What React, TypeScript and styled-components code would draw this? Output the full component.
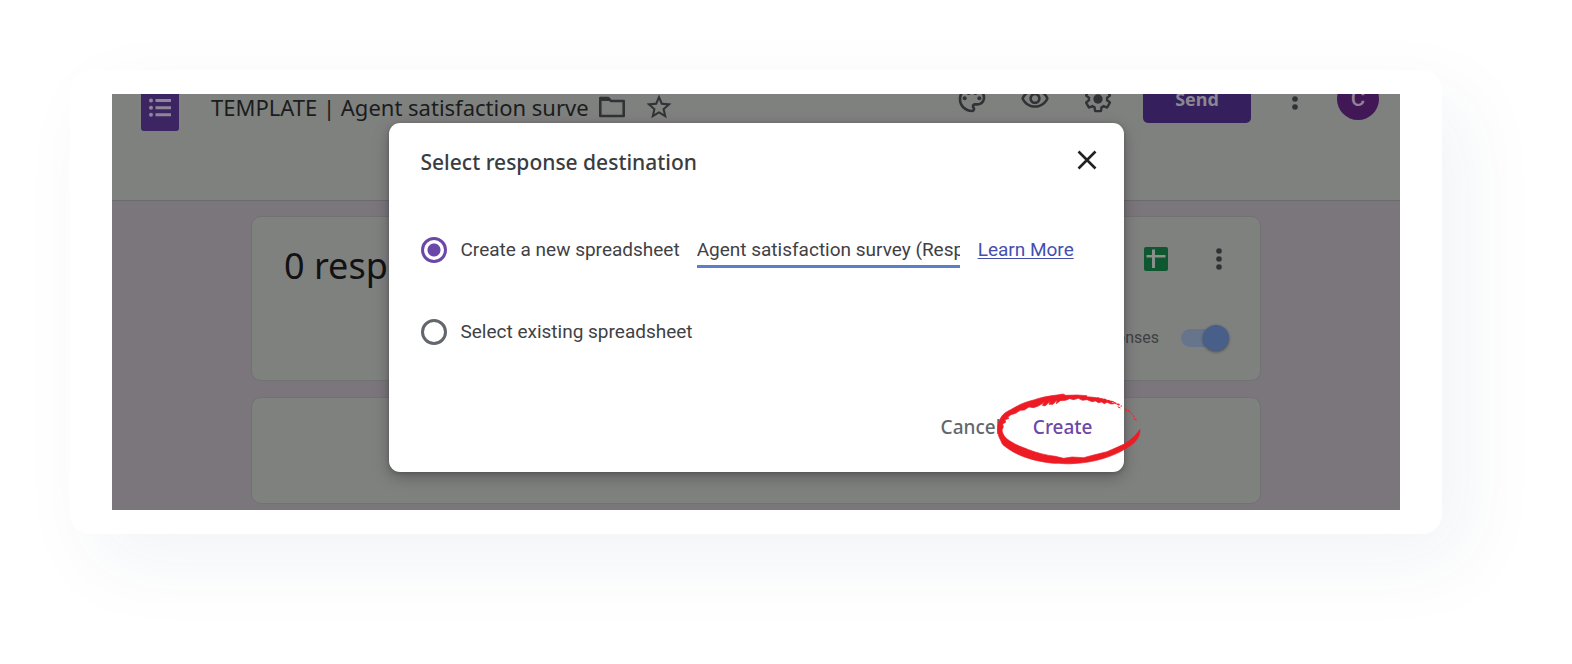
import React from "react";
import styled, { createGlobalStyle } from "styled-components";

const GlobalStyle = createGlobalStyle`
  *, *::before, *::after { box-sizing: border-box; }
  body { margin: 0; background: #ffffff; }
`;

const display = `"Noto Sans", "Open Sans", sans-serif`;
const body = `"Roboto", "Liberation Sans", sans-serif`;

const Page = styled.main`
  padding: 70px 130px 130px 70px;
  font-family: ${body};
`;

const Frame = styled.div`
  padding: 24px 42px;
  border-radius: 20px;
  background: #ffffff;
  box-shadow: 24px 28px 80px rgba(28, 62, 100, 0.06);
`;

const Stage = styled.div`
  position: relative;
  overflow: hidden;
  background: #7a767c;
  padding-bottom: 6px;
`;

const Header = styled.header`
  display: flow-root;
  height: 107px;
  background: #7f817f;
  border-bottom: 1px solid #6b6a6d;
`;

const Toolbar = styled.div`
  display: flex;
  align-items: flex-start;
  justify-content: space-between;
  margin-top: -19px;
  padding: 0 21px 0 29px;
`;

const TitleGroup = styled.div`
  display: flex;
  align-items: center;
  height: 64px;
`;

const Logo = styled.svg`
  margin: 0 32px 4px 0;
`;

const DocTitle = styled.h1`
  width: 377px;
  margin: 0 8px 0 0;
  overflow: hidden;
  white-space: nowrap;
  font: 400 22px/32px ${display};
  color: #1b1c1d;
`;

const IconButton = styled.button<{ $size?: number }>`
  display: flex;
  align-items: center;
  justify-content: center;
  width: ${(p) => p.$size ?? 32}px;
  height: ${(p) => p.$size ?? 32}px;
  padding: 0;
  border: 0;
  background: none;
  color: #303236;
`;

const TitleActions = styled.div`
  display: flex;
  gap: 15px;
`;

const Actions = styled.div`
  display: flex;
  align-items: center;
  height: 48px;
`;

const ActionIcons = styled.div`
  display: flex;
  gap: 31px;
  margin-right: 29px;
`;

const SendButton = styled.button`
  width: 108px;
  height: 48px;
  padding: 0;
  border: 0;
  border-radius: 5px;
  background: #35205d;
  color: #8b8792;
  font: 700 18px/24px ${display};
`;

const MoreSlot = styled.div`
  margin: 0 26px 0 28px;
`;

const Avatar = styled.div`
  width: 42px;
  height: 42px;
  border-radius: 50%;
  background: #411755;
  color: #918396;
  font: 500 22px/42px ${body};
  text-align: center;
`;

const Content = styled.div`
  display: flex;
  flex-direction: column;
  gap: 16px;
  max-width: 1010px;
  margin: 0 auto;
  padding-top: 15px;
`;

const Card = styled.section<{ $height: number }>`
  min-height: ${(p) => p.$height}px;
  padding: 25px 27px 0 32px;
  border: 1px solid #727274;
  border-radius: 10px;
  background: #7f817f;
`;

const CardRow = styled.div`
  display: flex;
  align-items: center;
  justify-content: space-between;
  height: 34px;
`;

const Count = styled.h2`
  margin: 14px 0 0;
  font: 400 36px/44px ${display};
  color: #121214;
`;

const CardTools = styled.div`
  display: flex;
  align-items: center;
  gap: 33px;
`;

const SwitchRow = styled.label`
  display: flex;
  align-items: center;
  justify-content: flex-end;
  gap: 22px;
  margin-top: 49px;
  padding-right: 4px;
  font: 400 16px/26px ${body};
  color: #3e4043;
`;

const Switch = styled.input`
  appearance: none;
  position: relative;
  width: 48px;
  height: 26px;
  margin: 0;
  &::before {
    content: "";
    position: absolute;
    inset: 4px 6px 4px 0;
    border-radius: 9px;
    background: #66758c;
  }
  &::after {
    content: "";
    position: absolute;
    top: 0;
    right: 0;
    width: 26px;
    height: 26px;
    border-radius: 50%;
    background: #485f8a;
    box-shadow: 0 1px 3px rgba(0, 0, 0, 0.4);
  }
`;

const Overlay = styled.div`
  position: absolute;
  inset: 0;
  display: flex;
  justify-content: center;
  align-items: flex-start;
  padding-top: 29px;
`;

const Dialog = styled.div`
  position: relative;
  width: 735px;
  padding: 21px 21px 22px 32px;
  border-radius: 11px;
  background: #ffffff;
  box-shadow: 0 5px 16px rgba(0, 0, 0, 0.28), 0 1px 4px rgba(0, 0, 0, 0.2);
  color: #3f4145;
`;

const DialogHead = styled.div`
  display: flex;
  align-items: center;
  justify-content: space-between;
`;

const DialogTitle = styled.h2`
  margin: 4px 0 0;
  font: 500 21px/28px ${display};
  color: #3a3c40;
`;

const Option = styled.div<{ $top: number }>`
  display: flex;
  align-items: center;
  height: 36px;
  margin-top: ${(p) => p.$top}px;
  font: 400 19px/26px ${body};
`;

const Radio = styled.input`
  appearance: none;
  width: 26px;
  height: 26px;
  margin: 0 14px 0 0;
  border: 3px solid #63676c;
  border-radius: 50%;
  background: #ffffff;
  &:checked {
    border-color: #6b48a8;
    background: radial-gradient(circle, #6b48a8 6px, #ffffff 7px);
  }
`;

const SheetName = styled.input`
  width: 263px;
  height: 36px;
  margin: 0 18px 0 17px;
  padding: 1px 0 0;
  border: 0;
  border-bottom: 3px solid #5b80c8;
  outline: 0;
  background: none;
  color: #3f4145;
  font: 400 19px/26px ${body};
`;

const LearnMore = styled.a`
  color: #4350b0;
  text-decoration: underline;
  text-underline-offset: 2px;
`;

const DialogFoot = styled.div`
  display: flex;
  justify-content: flex-end;
  gap: 32px;
  margin-top: 54px;
  padding-right: 10px;
`;

const TextButton = styled.button<{ $accent?: boolean }>`
  padding: 0;
  border: 0;
  background: none;
  font: 500 19px/46px ${display};
  color: ${(p) => (p.$accent ? "#6b48a8" : "#63676c")};
`;

const Highlight = styled.svg`
  position: absolute;
  right: -18px;
  bottom: 7px;
  pointer-events: none;
`;

const Dots = () => (
  <svg width="8" height="24" viewBox="0 0 8 24" fill="currentColor" aria-hidden="true">
    <circle cx="4" cy="4" r="2.8" />
    <circle cx="4" cy="12" r="2.8" />
    <circle cx="4" cy="20" r="2.8" />
  </svg>
);

export default function App() {
  return (
    <>
      <GlobalStyle />
      <Page>
        <Frame>
          <Stage>
            <Header>
              <Toolbar>
                <TitleGroup>
                  <Logo width="38" height="52" viewBox="0 0 38 52" aria-hidden="true">
                    <path d="M3 0h23l12 12v37a3 3 0 0 1-3 3H3a3 3 0 0 1-3-3V3a3 3 0 0 1 3-3z" fill="#3c2562" />
                    <g fill="#8d8797">
                      <circle cx="10" cy="21.500" r="2" />
                      <circle cx="10" cy="28.700" r="2" />
                      <circle cx="10" cy="35.700" r="2" />
                      <path d="M14.500 20H30v3H14.500zM14.500 27.200H30v3H14.500zM14.500 34.200H30v3H14.500z" />
                    </g>
                  </Logo>
                  <DocTitle>TEMPLATE | Agent satisfaction survey</DocTitle>
                  <TitleActions>
                    <IconButton aria-label="Move to folder">
                      <svg width="28" height="24" viewBox="0 0 28 24" fill="none" stroke="currentColor" strokeWidth="2.600" strokeLinejoin="round">
                        <path d="M2.300 3h8l2.700 3h12.700v15H2.300z" />
                        <path d="M2.300 3h8l2.700 3H2.300z" fill="currentColor" stroke="none" />
                      </svg>
                    </IconButton>
                    <IconButton aria-label="Star">
                      <svg width="30" height="30" viewBox="0 0 24 24" fill="currentColor">
                        <path d="M22 9.240l-7.190-.62L12 2 9.190 8.630 2 9.240l5.460 4.730L5.820 21 12 17.270 18.180 21l-1.630-7.030L22 9.240zM12 15.400l-3.760 2.270 1-4.280-3.320-2.880 4.380-.38L12 6.100l1.710 4.040 4.380.38-3.320 2.880 1 4.280L12 15.400z" />
                      </svg>
                    </IconButton>
                  </TitleActions>
                </TitleGroup>
                <Actions>
                  <ActionIcons>
                    <IconButton aria-label="Customize theme">
                      <svg width="32" height="32" viewBox="0 0 24 24" fill="currentColor">
                        <path d="M12 22C6.490 22 2 17.510 2 12S6.490 2 12 2s10 4.040 10 9c0 3.310-2.690 6-6 6h-1.770c-.28 0-.5.22-.5.5 0 .12.05.23.13.33.41.47.64 1.060.64 1.670 0 1.380-1.120 2.500-2.500 2.500zm0-18c-4.410 0-8 3.590-8 8s3.590 8 8 8c.28 0 .5-.22.5-.5 0-.16-.08-.28-.14-.35-.41-.46-.63-1.050-.63-1.650 0-1.380 1.120-2.500 2.500-2.500H16c2.210 0 4-1.790 4-4 0-3.860-3.590-7-8-7z" />
                        <circle cx="6.500" cy="11.500" r="1.500" />
                        <circle cx="9.500" cy="7.500" r="1.500" />
                        <circle cx="14.500" cy="7.500" r="1.500" />
                        <circle cx="17.500" cy="11.500" r="1.500" />
                      </svg>
                    </IconButton>
                    <IconButton aria-label="Preview">
                      <svg width="30" height="30" viewBox="0 0 24 24" fill="currentColor">
                        <path d="M12 6c3.790 0 7.170 2.130 8.820 5.500C19.170 14.870 15.790 17 12 17s-7.170-2.130-8.820-5.500C4.830 8.130 8.210 6 12 6m0-2C7 4 2.730 7.110 1 11.500 2.730 15.890 7 19 12 19s9.270-3.110 11-7.500C21.270 7.110 17 4 12 4zm0 5c1.380 0 2.500 1.120 2.500 2.500S13.380 14 12 14s-2.500-1.120-2.500-2.500S10.620 9 12 9m0-2c-2.480 0-4.500 2.020-4.500 4.500S9.520 16 12 16s4.500-2.020 4.500-4.500S14.480 7 12 7z" />
                      </svg>
                    </IconButton>
                    <IconButton aria-label="Settings">
                      <svg width="32" height="32" viewBox="0 0 24 24">
                        <path
                          d="M19.430 12.980c.04-.32.07-.64.07-.98s-.03-.66-.07-.98l2.110-1.650c.19-.15.24-.42.12-.64l-2-3.460c-.12-.22-.39-.3-.61-.22l-2.490 1c-.52-.4-1.080-.73-1.690-.98l-.38-2.650C14.460 2.180 14.250 2 14 2h-4c-.25 0-.46.18-.49.42l-.38 2.650c-.61.25-1.170.59-1.690.98l-2.490-1c-.23-.09-.49 0-.61.22l-2 3.460c-.13.22-.07.49.12.64l2.110 1.650c-.04.32-.07.65-.07.98s.03.66.07.98l-2.110 1.650c-.19.15-.24.42-.12.64l2 3.460c.12.22.39.3.61.22l2.490-1c.52.4 1.080.73 1.690.98l.38 2.650c.03.24.24.42.49.42h4c.25 0 .46-.18.49-.42l.38-2.650c.61-.25 1.170-.59 1.690-.98l2.490 1c.23.09.49 0 .61-.22l2-3.460c.12-.22.07-.49-.12-.64l-2.110-1.650z"
                          fill="none"
                          stroke="currentColor"
                          strokeWidth="2"
                          transform="translate(1.100 1.100) scale(.91)"
                        />
                        <circle cx="12" cy="12" r="3.500" fill="currentColor" />
                      </svg>
                    </IconButton>
                  </ActionIcons>
                  <SendButton>Send</SendButton>
                  <MoreSlot>
                    <IconButton aria-label="More options">
                      <Dots />
                    </IconButton>
                  </MoreSlot>
                  <Avatar>C</Avatar>
                </Actions>
              </Toolbar>
            </Header>

            <Content>
              <Card $height={165}>
                <CardRow>
                  <Count>0 responses</Count>
                  <CardTools>
                    <IconButton aria-label="Create spreadsheet">
                      <svg width="24" height="24" viewBox="0 0 24 24">
                        <rect width="24" height="24" rx="2" fill="#0f5730" />
                        <path d="M8 2.500h3V8h10.500v2.500H11V21H8V10.500H2.500V8H8z" fill="#87908a" />
                      </svg>
                    </IconButton>
                    <IconButton aria-label="Response options" $size={28}>
                      <Dots />
                    </IconButton>
                  </CardTools>
                </CardRow>
                <SwitchRow>
                  Accepting responses
                  <Switch type="checkbox" role="switch" defaultChecked />
                </SwitchRow>
              </Card>
              <Card $height={107} />
            </Content>

            <Overlay>
              <Dialog role="dialog" aria-modal="true" aria-labelledby="dialog-title">
                <DialogHead>
                  <DialogTitle id="dialog-title">Select response destination</DialogTitle>
                  <IconButton aria-label="Close">
                    <svg width="20" height="20" viewBox="0 0 20 20" stroke="#202124" strokeWidth="2.600">
                      <path d="M1.500 1.500l17 17M18.500 1.500l-17 17" />
                    </svg>
                  </IconButton>
                </DialogHead>
                <Option $top={56}>
                  <Radio type="radio" name="destination" id="new-sheet" defaultChecked />
                  <label htmlFor="new-sheet">Create a new spreadsheet</label>
                  <SheetName aria-label="Spreadsheet name" defaultValue="Agent satisfaction survey (Responses)" />
                  <LearnMore href="#learn-more">Learn More</LearnMore>
                </Option>
                <Option $top={46}>
                  <Radio type="radio" name="destination" id="existing-sheet" />
                  <label htmlFor="existing-sheet">Select existing spreadsheet</label>
                </Option>
                <DialogFoot>
                  <TextButton>Cancel</TextButton>
                  <TextButton $accent>Create</TextButton>
                </DialogFoot>
                <Highlight width="145" height="72" viewBox="230 40 435 216" aria-hidden="true">
                  <path
                    fill="#ed1c24"
                    stroke="#ed1c24"
                    strokeWidth="2"
                    d="M659 149 C660 172 645 190 622 203 C585 229 520 250 455 252 C438 254 420 250 400 251 C350 246 300 232 268 210 C252 199 245 196 242 184 C234 170 231 158 232 146 C232 130 238 118 247 106 C255 97 268 92 280 85 C300 73 318 66 340 61 C362 53 385 49 410 46 L428 43 L436 47 L470 46 L500 48 L498 51 L520 53 L545 57 L560 62 L580 66 L570 67 L582 72 L572 73 L560 68 L552 72 L544 67 L534 69 L526 64 L515 66 L500 60 L486 62 L474 56 L460 60 L448 57 L436 62 L420 63 L408 72 L410 62 L398 74 L386 74 L390 65 L374 79 L366 77 L372 68 L354 79 L340 84 L326 82 L312 91 L300 92 L286 101 L272 105 L262 113 L266 116 L254 121 L256 128 L247 133 L249 142 L245 151 C247 166 257 178 274 187 C286 196 305 202 325 210 C350 220 380 227 405 230 L430 236 L455 232 L490 234 L520 226 L560 216 L590 203 L610 194 C632 181 646 168 659 149 Z"
                  />
                  <path
                    fill="none"
                    stroke="#ed1c24"
                    strokeWidth="4"
                    strokeDasharray="7 4 3 5 9 4"
                    d="M530 55 Q575 62 607 82"
                  />
                  <path
                    fill="none"
                    stroke="#ed1c24"
                    strokeWidth="3"
                    d="M588 73l9 1M592 81l8 4M613 87l6 3M616 92l5 3M623 91l6 6M632 99l4 5M638 108l4 3M641 115l7 8"
                  />
                </Highlight>
              </Dialog>
            </Overlay>
          </Stage>
        </Frame>
      </Page>
    </>
  );
}
